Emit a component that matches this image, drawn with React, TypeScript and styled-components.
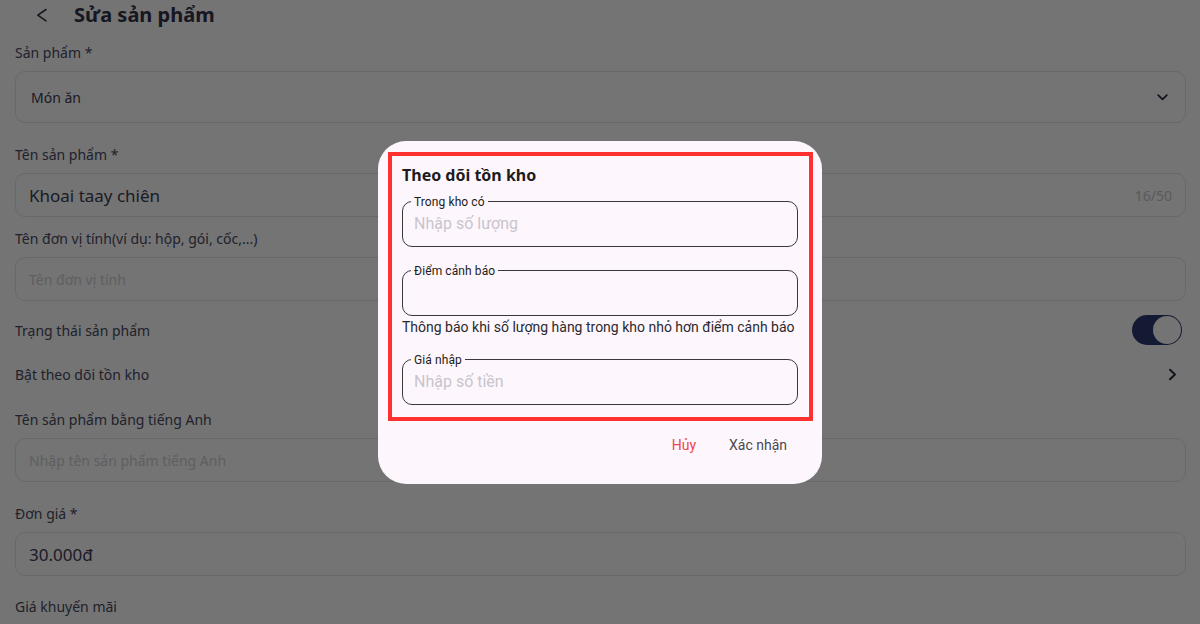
import React from "react";
import styled, { createGlobalStyle } from "styled-components";

const GlobalStyle = createGlobalStyle`
  html, body { margin: 0; padding: 0; background: #ffffff; }
  body { font-family: "Noto Sans", "Open Sans", sans-serif; overflow: hidden; }
  * { box-sizing: border-box; }
`;

const Page = styled.div`
  width: 1200px;
  height: 624px;
  overflow: hidden;
  background: #ffffff;
  color: #4a4a5e;
`;

const Header = styled.header`
  height: 30px;
  display: flex;
  align-items: center;
  padding-left: 35px;
  gap: 25px;
`;

const BackIcon = styled.svg`
  width: 14px;
  height: 16px;
  flex: none;
`;

const PageTitle = styled.h1`
  margin: 0;
  font-size: 20px;
  font-weight: 700;
  line-height: 28px;
  color: #34344a;
`;

const Form = styled.div`
  display: flex;
  flex-direction: column;
  padding: 0 14px 0 15px;
`;

const Field = styled.div<{ $top: number }>`
  display: flex;
  flex-direction: column;
  gap: 10px;
  margin-top: ${(p) => p.$top}px;
`;

const Label = styled.div`
  font-size: 14px;
  line-height: 23px;
  height: 20px;
  color: #4a4a5f;
`;

const InputBox = styled.div<{ $h?: number; $pl?: number }>`
  height: ${(p) => p.$h ?? 44}px;
  border: 1px solid #e4e4e6;
  border-radius: 10px;
  display: flex;
  align-items: center;
  padding: 0 13px 0 ${(p) => p.$pl ?? 13}px;
`;

const Value = styled.span<{ $size?: number }>`
  flex: 1;
  font-size: ${(p) => p.$size ?? 16}px;
  color: #3d3d52;
`;

const Placeholder = styled.span`
  flex: 1;
  font-size: 14px;
  color: #d0d0d4;
`;

const Counter = styled.span`
  font-size: 14px;
  color: #c6c6ca;
`;

const Row = styled.div<{ $top: number }>`
  height: 30px;
  margin-top: ${(p) => p.$top}px;
  display: flex;
  align-items: center;
  justify-content: space-between;
  font-size: 14px;
  line-height: 22px;
  color: #4a4a5f;
`;

const RowText = styled.span`
  padding-top: 2px;
`;

const Toggle = styled.div`
  width: 50px;
  height: 30px;
  border-radius: 15px;
  background: #2e3b72;
  padding: 1px;
  display: flex;
  justify-content: flex-end;
  margin-right: 4px;
`;

const Knob = styled.div`
  width: 28px;
  height: 28px;
  border-radius: 50%;
  background: #ffffff;
`;

const Scrim = styled.div`
  position: fixed;
  inset: 0;
  background: rgba(0, 0, 0, 0.545);
  display: flex;
  align-items: center;
  justify-content: center;
`;

const Dialog = styled.div`
  width: 444px;
  height: 343px;
  background: #fdf7fd;
  border-radius: 28px;
  padding: 11px 9px 19px 10px;
  display: flex;
  flex-direction: column;
  font-family: Roboto, "Noto Sans", sans-serif;
`;

const Highlight = styled.div`
  border: 4px solid #fe3131;
  padding: 8px 11px 12px 10px;
  display: flex;
  flex-direction: column;
`;

const DialogTitle = styled.h2`
  margin: 0 0 9px;
  font-family: "Noto Sans", sans-serif;
  font-size: 16px;
  line-height: 22px;
  font-weight: 700;
  color: #1d1b20;
`;

const Outlined = styled.fieldset<{ $top?: number }>`
  margin: ${(p) => p.$top ?? 0}px 0 0;
  padding: 0 12px 8px 12px;
  border: 1px solid #3a383d;
  border-radius: 10px;
  min-width: 0;
`;

const Legend = styled.legend`
  margin-left: -4px;
  padding: 0 3px;
  font-size: 12px;
  line-height: 14px;
  letter-spacing: 0.1px;
  color: #1d1b20;
`;

const Input = styled.input`
  display: block;
  width: 100%;
  height: 29px;
  border: 0;
  padding: 0;
  margin: 0 0 0 -1px;
  outline: none;
  background: transparent;
  font-family: Roboto, sans-serif;
  font-size: 16px;
  color: #1d1b20;
  &::placeholder { color: #c9c4cb; }
`;

const Helper = styled.div`
  margin-top: 1px;
  font-size: 14px;
  line-height: 20px;
  white-space: nowrap;
  color: #2b292e;
`;

const Actions = styled.div`
  margin-top: 4px;
  height: 40px;
  display: flex;
  justify-content: flex-end;
  align-items: center;
  gap: 9px;
  padding-right: 14px;
`;

const TextButton = styled.button<{ $danger?: boolean }>`
  height: 40px;
  padding: 0 12px;
  border: 0;
  background: transparent;
  font-family: Roboto, sans-serif;
  font-size: 14px;
  color: ${(p) => (p.$danger ? "#f04646" : "#4a484d")};
`;

export default function App() {
  return (
    <>
      <GlobalStyle />
      <Page>
        <Header>
          <BackIcon viewBox="0 0 14 16" fill="none" stroke="#34344a" strokeWidth="1.6" strokeLinecap="round" strokeLinejoin="round">
            <path d="M11 2.5 L2.8 8.2 L11 13.9" />
          </BackIcon>
          <PageTitle>Sửa sản phẩm</PageTitle>
        </Header>
        <Form>
          <Field $top={11}>
            <Label>Sản phẩm *</Label>
            <InputBox $h={52} $pl={15}>
              <Value $size={14}>Món ăn</Value>
              <svg width="11" height="7" viewBox="0 0 11 7" fill="none" stroke="#2c2c44" strokeWidth="1.8" strokeLinecap="round" strokeLinejoin="round" style={{ marginRight: 4 }}>
                <path d="M1.2 1.2 L5.5 5.3 L9.8 1.2" />
              </svg>
            </InputBox>
          </Field>
          <Field $top={20}>
            <Label>Tên sản phẩm *</Label>
            <InputBox>
              <Value $size={17}>Khoai taay chiên</Value>
              <Counter>16/50</Counter>
            </InputBox>
          </Field>
          <Field $top={10}>
            <Label>Tên đơn vị tính(ví dụ: hộp, gói, cốc,...)</Label>
            <InputBox>
              <Placeholder>Tên đơn vị tính</Placeholder>
            </InputBox>
          </Field>
          <Row $top={14}>
            <RowText>Trạng thái sản phẩm</RowText>
            <Toggle>
              <Knob />
            </Toggle>
          </Row>
          <Row $top={14}>
            <RowText>Bật theo dõi tồn kho</RowText>
            <svg width="9" height="13" viewBox="0 0 9 13" fill="none" stroke="#2c2c44" strokeWidth="2" strokeLinecap="round" strokeLinejoin="round" style={{ marginRight: 9 }}>
              <path d="M2 1.8 L7 6.5 L2 11.2" />
            </svg>
          </Row>
          <Field $top={19}>
            <Label>Tên sản phẩm bằng tiếng Anh</Label>
            <InputBox>
              <Placeholder>Nhập tên sản phẩm tiếng Anh</Placeholder>
            </InputBox>
          </Field>
          <Field $top={20}>
            <Label>Đơn giá *</Label>
            <InputBox>
              <Value $size={17}>30.000đ</Value>
            </InputBox>
          </Field>
          <Field $top={19}>
            <Label>Giá khuyến mãi</Label>
          </Field>
        </Form>
      </Page>
      <Scrim>
        <Dialog>
          <Highlight>
            <DialogTitle>Theo dõi tồn kho</DialogTitle>
            <Outlined>
              <Legend>Trong kho có</Legend>
              <Input placeholder="Nhập số lượng" />
            </Outlined>
            <Outlined $top={17}>
              <Legend>Điểm cảnh báo</Legend>
              <Input />
            </Outlined>
            <Helper>Thông báo khi số lượng hàng trong kho nhỏ hơn điểm cảnh báo</Helper>
            <Outlined $top={16}>
              <Legend>Giá nhập</Legend>
              <Input placeholder="Nhập số tiền" />
            </Outlined>
          </Highlight>
          <Actions>
            <TextButton $danger>Hủy</TextButton>
            <TextButton>Xác nhận</TextButton>
          </Actions>
        </Dialog>
      </Scrim>
    </>
  );
}
